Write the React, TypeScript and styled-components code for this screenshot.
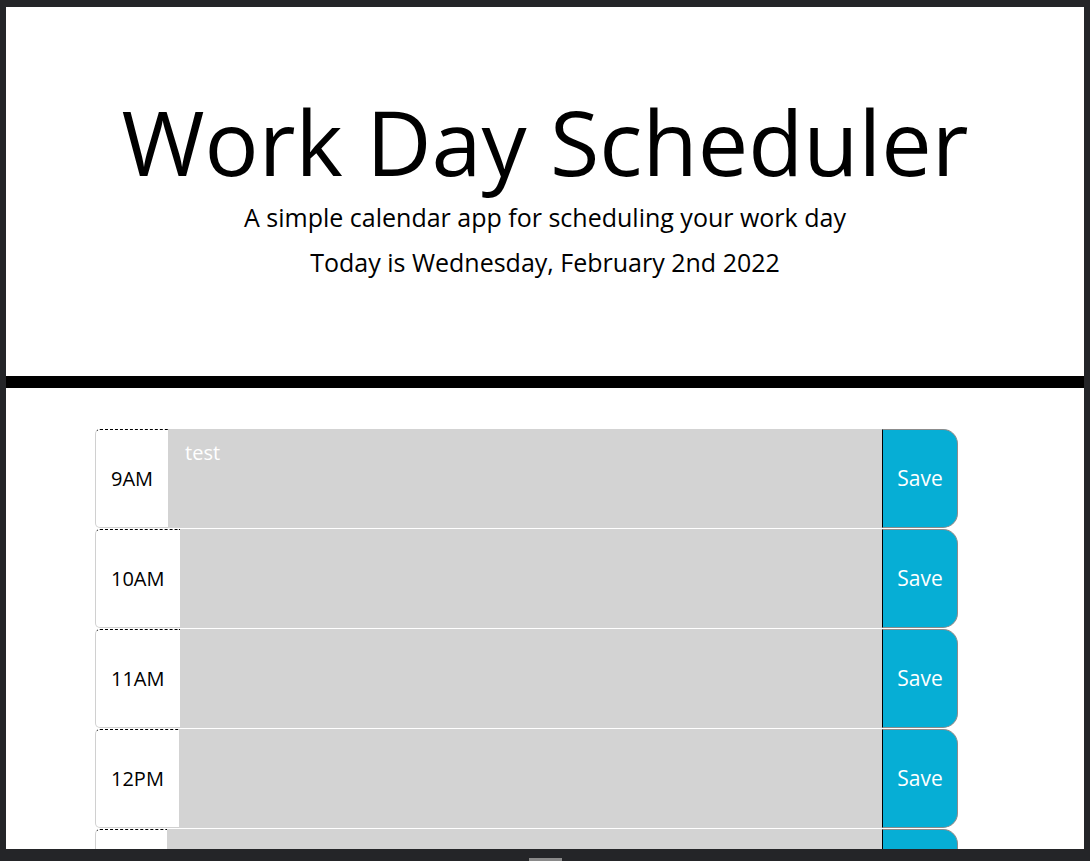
import React from "react";
import styled, { createGlobalStyle } from "styled-components";

const GlobalStyle = createGlobalStyle`
  html, body { margin: 0; padding: 0; }
  body {
    background: #242528;
    font-family: "Open Sans", "Noto Sans", sans-serif;
  }
  * { box-sizing: border-box; }
`;

const Frame = styled.div`
  position: relative;
  width: 1090px;
  height: 861px;
  padding: 7px 6px 12px 6px;
  background: #242528;
`;

const ScrollThumb = styled.div`
  position: absolute;
  left: 529px;
  bottom: 0;
  width: 33px;
  height: 3px;
  background: #8a8a8a;
`;

const Viewport = styled.div`
  width: 100%;
  height: 100%;
  background: #ffffff;
  overflow: hidden;
`;

const Jumbotron = styled.header`
  display: flex;
  flex-direction: column;
  align-items: center;
  height: 381px;
  padding-top: 80px;
  border-bottom: 12px solid #000;
  text-align: center;
  color: #000;
`;

const Title = styled.h1`
  margin: 0 0 4px;
  font-size: 90px;
  font-weight: 400;
  line-height: 1.2;
`;

const Lead = styled.p<{ $gap?: number }>`
  margin: 0 0 ${(p) => p.$gap ?? 0}px;
  font-size: 25px;
  font-weight: 400;
  line-height: 1.5;
`;

const Schedule = styled.main`
  display: flex;
  flex-direction: column;
  padding: 40px 0 0 89px;
`;

const TimeBlock = styled.div`
  display: flex;
  width: 863px;
  height: 100px;
  border-top: 1px solid #fff;
`;

const Hour = styled.div`
  display: flex;
  align-items: center;
  padding: 0 15px 1px;
  background: #fff;
  color: #000;
  font-size: 20px;
  border-top: 1px dashed #000;
  border-left: 1px solid #d0d0d0;
  border-bottom: 1px solid #d0d0d0;
  border-radius: 5px 0 0 5px;
  white-space: nowrap;
`;

const Entry = styled.textarea`
  flex: 1;
  min-width: 0;
  height: 100%;
  margin: 0;
  padding: 9px 17px;
  border: none;
  outline: none;
  resize: none;
  background: #d3d3d3;
  color: #fff;
  font-family: "Open Sans", "Noto Sans", sans-serif;
  font-size: 20px;
  line-height: 1.5;
`;

const SaveButton = styled.button`
  width: 76px;
  height: 100%;
  margin: 0;
  padding: 0 0 1px;
  background: #06aed5;
  color: #fff;
  font-family: "Open Sans", "Noto Sans", sans-serif;
  font-size: 21px;
  border: 1px solid #8c8c8c;
  border-left: 1px solid #000;
  border-radius: 0 15px 15px 0;
  cursor: pointer;
`;

const hours = [
  { label: "9AM", text: "test" },
  { label: "10AM", text: "" },
  { label: "11AM", text: "" },
  { label: "12PM", text: "" },
  { label: "1PM", text: "" },
];

export default function App() {
  return (
    <>
      <GlobalStyle />
      <Frame>
        <Viewport>
          <Jumbotron>
            <Title>Work Day Scheduler</Title>
            <Lead $gap={7}>A simple calendar app for scheduling your work day</Lead>
            <Lead>Today is Wednesday, February 2nd 2022</Lead>
          </Jumbotron>
          <Schedule>
            {hours.map((h) => (
              <TimeBlock key={h.label}>
                <Hour>{h.label}</Hour>
                <Entry defaultValue={h.text} />
                <SaveButton>Save</SaveButton>
              </TimeBlock>
            ))}
          </Schedule>
        </Viewport>
        <ScrollThumb />
      </Frame>
    </>
  );
}
